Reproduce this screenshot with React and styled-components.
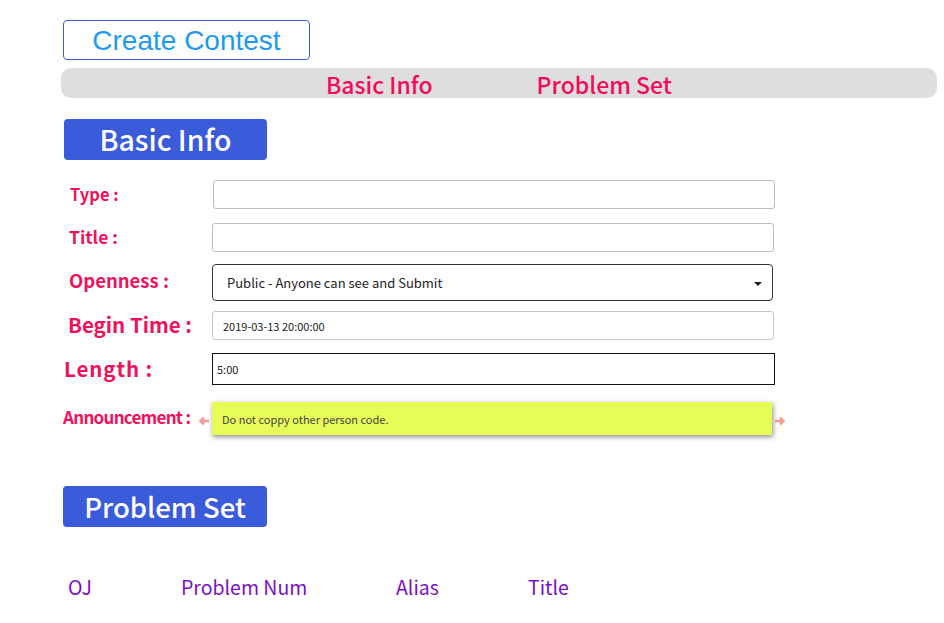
import React from "react";
import styled, { createGlobalStyle } from "styled-components";

const GlobalStyle = createGlobalStyle`
  body {
    margin: 0;
    background: #fff;
    font-family: "Noto Sans CJK SC", "Noto Sans", sans-serif;
  }
`;

const Page = styled.div`
  width: 944px;
  height: 623px;
  overflow: hidden;
  padding-top: 20px;
  box-sizing: border-box;
`;

const CreateButton = styled.button`
  display: block;
  margin-left: 63px;
  width: 247px;
  height: 40px;
  padding: 0;
  background: #fff;
  border: 1px solid #3d5fd6;
  border-radius: 4px;
  color: #1e9af0;
  font-family: "Liberation Sans", Arial, sans-serif;
  font-size: 28px;
  line-height: 40px;
`;

const TabBar = styled.div`
  margin: 8px 7px 0 61px;
  height: 30px;
  background: #dedede;
  border-radius: 10px;
  display: flex;
  align-items: center;
  padding-left: 265px;
  gap: 104px;
`;

const Tab = styled.span`
  color: #f50a5a;
  font-size: 23px;
  font-weight: 500;
  line-height: 30px;
  padding-top: 2px;
`;

const Badge = styled.div`
  margin-left: ${(p) => p.$left}px;
  margin-top: ${(p) => p.$top}px;
  width: ${(p) => p.$width}px;
  height: 41px;
  background: #3a5bda;
  border-radius: 4px;
  color: #fff;
  font-size: ${(p) => p.$size}px;
  font-weight: 500;
  line-height: 40px;
  text-align: center;
`;

const Form = styled.div`
  display: flex;
  flex-direction: column;
  margin-top: 20px;
`;

const Row = styled.div`
  display: grid;
  grid-template-columns: 212px 1fr;
  align-items: center;
  margin-top: ${(p) => p.$top || 0}px;
  width: 812px;
`;

const Label = styled.label`
  padding-left: ${(p) => p.$indent}px;
  padding-bottom: ${(p) => p.$lift || 0}px;
  color: #f0115c;
  font-size: ${(p) => p.$size}px;
  font-weight: 700;
  line-height: 1;
  letter-spacing: ${(p) => p.$spacing || 0}px;
  white-space: nowrap;
`;

const TextInput = styled.div`
  margin-left: ${(p) => p.$shift || 0}px;
  width: ${(p) => p.$width || 562}px;
  height: ${(p) => p.$height || 29}px;
  box-sizing: border-box;
  border: 1px solid ${(p) => p.$border || "#bdbdbd"};
  border-radius: ${(p) => (p.$square ? 0 : 3)}px;
  display: flex;
  align-items: center;
  padding-left: ${(p) => p.$pad || 10}px;
  font-size: 11px;
  color: #222;
`;

const Select = styled.div`
  width: 561px;
  height: 37px;
  box-sizing: border-box;
  border: 1px solid #333;
  border-radius: 4px;
  display: flex;
  align-items: center;
  justify-content: space-between;
  padding: 0 10px 0 14px;
  font-size: 13px;
  color: #222;
`;

const Caret = styled.span`
  width: 0;
  height: 0;
  border-left: 4px solid transparent;
  border-right: 4px solid transparent;
  border-top: 4px solid #222;
  margin-top: 2px;
`;

const AnnounceWrap = styled.div`
  display: flex;
  align-items: center;
  margin-left: -16px;
`;

const ArrowBox = styled.span`
  width: 16px;
  display: flex;
  justify-content: center;
  padding-top: 4px;
`;

const Note = styled.div`
  width: 560px;
  height: 33px;
  background: #e7fc58;
  box-shadow: 1px 2px 5px rgba(0, 0, 0, 0.45);
  display: flex;
  align-items: center;
  padding-left: 10px;
  box-sizing: border-box;
  font-size: 11px;
  color: #444;
`;

const HeaderRow = styled.div`
  display: flex;
  margin-top: 45px;
  padding-left: 68px;
`;

const HeaderCell = styled.span`
  width: ${(p) => p.$width}px;
  color: #7a10c2;
  font-size: 19.5px;
  font-weight: 400;
`;

function Arrow({ dir }) {
  const d =
    dir === "left"
      ? "M11 5H2.5M6 1.5L2.5 5L6 8.5"
      : "M1 5H9.5M6 1.5L9.5 5L6 8.5";
  return (
    <ArrowBox>
      <svg width="12" height="10" viewBox="0 0 12 10">
        <path d={d} fill="none" stroke="#f79696" strokeWidth="2.4" />
      </svg>
    </ArrowBox>
  );
}

export default function App() {
  return (
    <Page>
      <GlobalStyle />
      <CreateButton>Create Contest</CreateButton>
      <TabBar>
        <Tab>Basic Info</Tab>
        <Tab>Problem Set</Tab>
      </TabBar>

      <Badge $left={64} $top={21} $width={203} $size={28.5}>
        Basic Info
      </Badge>

      <Form>
        <Row>
          <Label $indent={70} $size={16.5} $lift={1}>Type :</Label>
          <TextInput $shift={1} />
        </Row>
        <Row $top={14}>
          <Label $indent={69} $size={17.5} $lift={1}>Title :</Label>
          <TextInput />
        </Row>
        <Row $top={12}>
          <Label $indent={69} $size={18.5} $lift={4}>Openness :</Label>
          <Select>
            <span>Public - Anyone can see and Submit</span>
            <Caret />
          </Select>
        </Row>
        <Row $top={10}>
          <Label $indent={68} $size={20.5} $lift={2}>Begin Time :</Label>
          <TextInput $border="#c8c8c8">2019-03-13 20:00:00</TextInput>
        </Row>
        <Row $top={13}>
          <Label $indent={64} $size={20.5} $spacing={0.9} $lift={2}>Length :</Label>
          <TextInput $width={563} $height={32} $border="#111" $square $pad={4}>
            5:00
          </TextInput>
        </Row>
        <Row $top={17}>
          <Label $indent={63} $size={17} $spacing={-0.7} $lift={4}>Announcement :</Label>
          <AnnounceWrap>
            <Arrow dir="left" />
            <Note>Do not coppy other person code.</Note>
            <Arrow dir="right" />
          </AnnounceWrap>
        </Row>
      </Form>

      <Badge $left={63} $top={51} $width={204} $size={27.5}>
        Problem Set
      </Badge>

      <HeaderRow>
        <HeaderCell $width={113}>OJ</HeaderCell>
        <HeaderCell $width={215}>Problem Num</HeaderCell>
        <HeaderCell $width={132}>Alias</HeaderCell>
        <HeaderCell $width={100}>Title</HeaderCell>
      </HeaderRow>
    </Page>
  );
}
